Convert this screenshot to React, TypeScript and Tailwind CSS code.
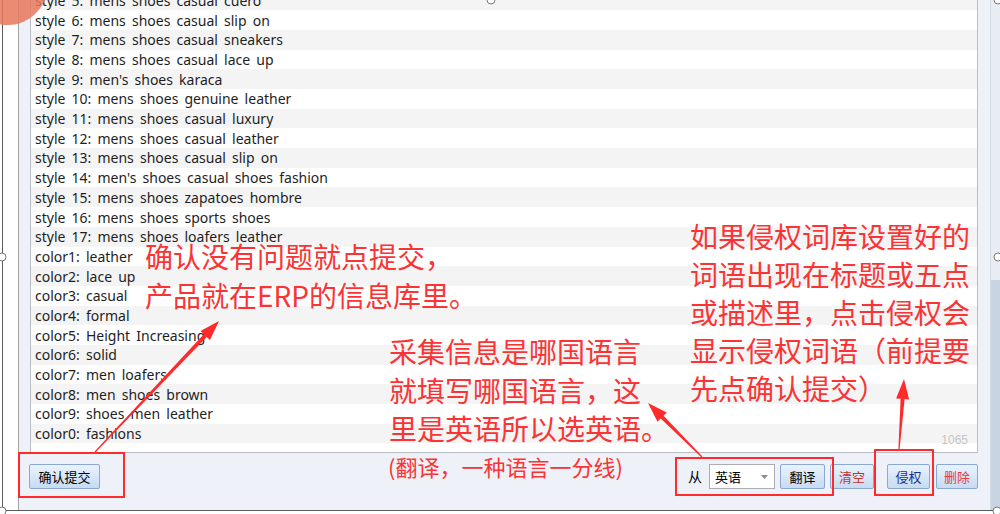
import React from "react";

const rows = [
  "style 5: mens shoes casual cuero",
  "style 6: mens shoes casual slip on",
  "style 7: mens shoes casual sneakers",
  "style 8: mens shoes casual lace up",
  "style 9: men's shoes karaca",
  "style 10: mens shoes genuine leather",
  "style 11: mens shoes casual luxury",
  "style 12: mens shoes casual leather",
  "style 13: mens shoes casual slip on",
  "style 14: men's shoes casual shoes fashion",
  "style 15: mens shoes zapatoes hombre",
  "style 16: mens shoes sports shoes",
  "style 17: mens shoes loafers leather",
  "color1: leather",
  "color2: lace up",
  "color3: casual",
  "color4: formal",
  "color5: Height Increasing",
  "color6: solid",
  "color7: men loafers",
  "color8: men shoes brown",
  "color9: shoes men leather",
  "color0: fashions",
  "",
];

// tapered red arrow, tail -> tip
function arrowPoints(x1: number, y1: number, x2: number, y2: number, tail = 1.2, neck = 4, headLen = 20, headW = 13) {
  const len = Math.hypot(x2 - x1, y2 - y1);
  const ux = (x2 - x1) / len;
  const uy = (y2 - y1) / len;
  const px = -uy;
  const py = ux;
  const nx = x2 - ux * headLen;
  const ny = y2 - uy * headLen;
  const pts = [
    [x1 + (px * tail) / 2, y1 + (py * tail) / 2],
    [nx + (px * neck) / 2, ny + (py * neck) / 2],
    [nx + (px * headW) / 2, ny + (py * headW) / 2],
    [x2, y2],
    [nx - (px * headW) / 2, ny - (py * headW) / 2],
    [nx - (px * neck) / 2, ny - (py * neck) / 2],
    [x1 - (px * tail) / 2, y1 - (py * tail) / 2],
  ];
  return pts.map((p) => p.map((v) => v.toFixed(1)).join(",")).join(" ");
}

const cjk = { fontFamily: "'Noto Sans CJK SC', sans-serif" };

const btn =
  "h-[25px] flex items-center justify-center rounded-[2px] border border-[#8aa8d0] bg-linear-to-b from-[#eaf3fd] to-[#c7dbf2] text-[13px] leading-none";

export default function App() {
  return (
    <div className="relative w-[1000px] h-[514px] bg-white overflow-hidden">
      {/* window */}
      <div className="ml-[2px] w-[998px] h-[511px] flex border-l border-b border-[#5c5c5c]">
        <div className="w-[15px] bg-white" />

        {/* panel */}
        <div className="w-[972px] flex flex-col border-l border-[#a3a3a3] bg-[#eef2f8]">
          <div className="pl-[11px] pr-[12px]">
            {/* list */}
            <div
              className="relative h-[453px] overflow-hidden bg-white border-x border-b border-[#b9bec6] text-[14px] text-[#1e1e1e]"
              style={{ fontFamily: "'Noto Sans', sans-serif", wordSpacing: "2.5px" }}
            >
              <div className="-mt-[9.4px] flex flex-col">
                {rows.map((r, i) => (
                  <div
                    key={i}
                    className={`h-[19.7px] shrink-0 flex items-center pl-[4px] whitespace-nowrap ${i % 2 === 0 ? "bg-[#f4f4f4]" : "bg-white"}`}
                  >
                    {r}
                  </div>
                ))}
              </div>
              <div
                className="absolute right-[9px] bottom-[6px] text-[12px] leading-none text-[#c4c4c4]"
                style={{ fontFamily: "'Liberation Sans', sans-serif" }}
              >
                1065
              </div>
            </div>
          </div>

          {/* bottom bar */}
          <div className="flex-1 flex items-start justify-between pt-[11px] pl-[10px] pr-[12px]" style={cjk}>
            <button className={`${btn} w-[71px] text-black`}>确认提交</button>
            <div className="flex items-center">
              <span className="text-[14px] text-black mr-[7px]">从</span>
              <div className="w-[66px] h-[25px] flex items-center justify-between bg-white border border-[#abadb3] pl-[5px] pr-[6px] text-[13px] text-black">
                <span>英语</span>
                <svg width="7" height="4" viewBox="0 0 7 4">
                  <path d="M0 0 L7 0 L3.5 4 Z" fill="#8c8c8c" />
                </svg>
              </div>
              <button className={`${btn} w-[45px] ml-[5px] text-black`}>翻译</button>
              <button className={`${btn} w-[44px] ml-[5px] text-[#c8322c]`}>清空</button>
              <button className={`${btn} w-[43px] ml-[13px] text-[#1c2f8c]`}>侵权</button>
              <button className={`${btn} w-[42px] ml-[6px] text-[#e83a3a]`}>删除</button>
            </div>
          </div>
        </div>

        {/* scroll strip */}
        <div className="w-[10px] flex flex-col border-l border-[#d3dbe5]">
          <div className="h-[280px] bg-[#e8edf4]" />
          <div className="flex-1 bg-[#c9d4e3]" />
        </div>
      </div>

      {/* annotation boxes */}
      <div className="absolute left-[18px] top-[452px] w-[107px] h-[46px] border-2 border-[#ff2a2a]" />
      <div className="absolute left-[675px] top-[457px] w-[159px] h-[39px] border-2 border-[#ff2a2a]" />
      <div className="absolute left-[874px] top-[449px] w-[60px] h-[47px] border-2 border-[#ff2a2a]" />

      {/* annotation texts */}
      <div className="absolute left-[145px] top-[237px] text-[28px] leading-[39px] text-[#fa3434] whitespace-nowrap" style={cjk}>
        <div>确认没有问题就点提交，</div>
        <div>产品就在ERP的信息库里。</div>
      </div>
      <div className="absolute left-[389px] top-[332px] text-[28px] leading-[38.5px] text-[#fa3434] whitespace-nowrap" style={cjk}>
        <div>采集信息是哪国语言</div>
        <div>就填写哪国语言，这</div>
        <div>里是英语所以选英语。</div>
      </div>
      <div className="absolute left-[388px] top-[452px] text-[22px] leading-[28px] text-[#fa3434] whitespace-nowrap" style={cjk}>
        (翻译，一种语言一分线)
      </div>
      <div className="absolute left-[690px] top-[217px] text-[28px] leading-[38px] text-[#fa3434] whitespace-nowrap" style={cjk}>
        <div>如果侵权词库设置好的</div>
        <div>词语出现在标题或五点</div>
        <div>或描述里，点击侵权会</div>
        <div>显示侵权词语（前提要</div>
        <div>先点确认提交）</div>
      </div>

      {/* arrows, blob, handles */}
      <svg className="absolute left-0 top-0 pointer-events-none" width="1000" height="514" viewBox="0 0 1000 514">
        <ellipse cx="8" cy="-22" rx="42" ry="47" fill="#e6785c" opacity="0.85" />
        <polygon points={arrowPoints(95, 452, 219, 321)} fill="#ff2a2a" />
        <polygon points={arrowPoints(702, 457, 648, 403)} fill="#ff2a2a" />
        <polygon points={arrowPoints(899, 449, 904, 379)} fill="#ff2a2a" />
        {[
          [2, 257],
          [998, 257],
          [491, 0],
          [998, 0],
          [2, 511],
          [997, 511],
        ].map(([cx, cy], i) => (
          <circle key={i} cx={cx} cy={cy} r="4" fill="white" stroke="#7a7a7a" strokeWidth="1" />
        ))}
      </svg>
    </div>
  );
}
